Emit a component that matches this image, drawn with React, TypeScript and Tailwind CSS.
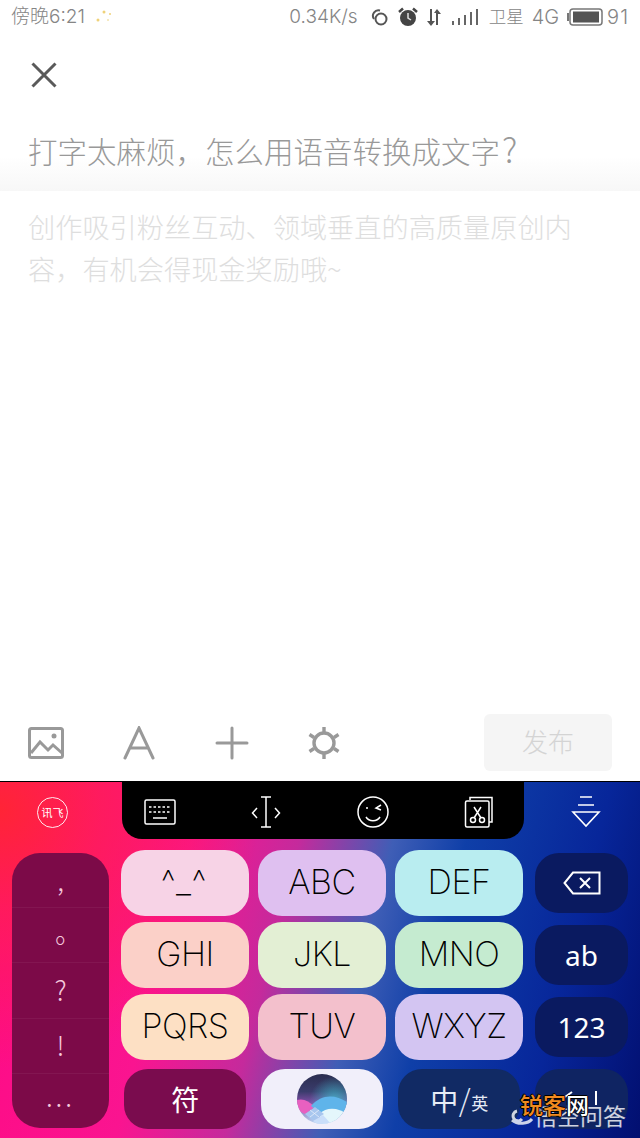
const cjk = "font-['Noto_Sans_CJK_SC',sans-serif]";

const letterRows = [
  [
    { label: "^_^", cls: "bg-[#f7d3e6] tracking-[3px]" },
    { label: "ABC", cls: "bg-[#dfc0f0]" },
    { label: "DEF", cls: "bg-[#b9edf0]" },
  ],
  [
    { label: "GHI", cls: "bg-[#fbd0c8]" },
    { label: "JKL", cls: "bg-[#e3efd4]" },
    { label: "MNO", cls: "bg-[#c5ebd0]" },
  ],
  [
    { label: "PQRS", cls: "bg-[#fde0c4]" },
    { label: "TUV", cls: "bg-[#f3c0cc]" },
    { label: "WXYZ", cls: "bg-[#d3c5f2]" },
  ],
];

const punctuation = [
  { label: ",", cls: "" },
  { label: "。", cls: "translate-x-[8px] -translate-y-[3px]" },
  { label: "?", cls: "" },
  { label: "!", cls: "" },
  { label: "...", cls: "tracking-[3px] -translate-y-[5px]" },
];

const StatusIcons = () => (
  <>
    {/* link */}
    <svg width="20" height="20" viewBox="0 0 20 20" fill="none" stroke="#555" strokeWidth="2">
      <circle cx="12" cy="12" r="5.5" />
      <path d="M5 12 A5.5 5.5 0 0 1 11 3.5" />
    </svg>
    {/* alarm */}
    <svg width="20" height="20" viewBox="0 0 20 20" className="ml-[9px]">
      <circle cx="10" cy="11" r="8" fill="#444" />
      <path d="M1 5 L5 1.5 M19 5 L15 1.5" stroke="#444" strokeWidth="2.5" />
      <path d="M10 6 V11 L13 13" stroke="#ddd" strokeWidth="1.5" fill="none" />
    </svg>
    {/* data arrows */}
    <svg width="16" height="18" viewBox="0 0 16 18" className="ml-2" fill="#555">
      <path d="M4 1h2v12h3l-4 5-4-5h3z" />
      <path d="M10 17h2V6h3l-4-5-3 4h2z" />
    </svg>
    {/* signal */}
    <svg width="26" height="18" viewBox="0 0 26 18" className="ml-[10px]" fill="#666">
      <rect x="0" y="13" width="2" height="4" />
      <rect x="6" y="10" width="2" height="7" />
      <rect x="12" y="7" width="2" height="10" />
      <rect x="18" y="4" width="2" height="13" />
      <rect x="24" y="1" width="2" height="16" />
    </svg>
  </>
);

const Battery = () => (
  <svg width="36" height="18" viewBox="0 0 36 18" className="ml-2">
    <rect x="0" y="5" width="2" height="8" fill="#777" />
    <rect x="3" y="1" width="32" height="16" rx="3" fill="none" stroke="#777" strokeWidth="1.5" />
    <rect x="6" y="3.5" width="26" height="11" fill="#555" />
  </svg>
);

const Sparkles = () => (
  <svg width="18" height="18" viewBox="0 0 18 18" fill="#efd27a" className="ml-[11px]">
    <circle cx="8" cy="4" r="1.5" />
    <circle cx="14" cy="6" r="1" />
    <circle cx="2" cy="12" r="1.5" />
    <circle cx="12" cy="12" r="1" fill="#f3e3ac" />
  </svg>
);

const Siri = () => (
  <svg width="50" height="50" viewBox="0 0 50 50">
    <defs>
      <linearGradient id="orb" x1="0" y1="0" x2="0" y2="1">
        <stop offset="0" stopColor="#2b2d4f" />
        <stop offset="0.35" stopColor="#3a3c6c" />
        <stop offset="0.55" stopColor="#7a4ba0" />
        <stop offset="1" stopColor="#bcd8f4" />
      </linearGradient>
      <radialGradient id="glowTeal" cx="0.75" cy="0.55" r="0.5">
        <stop offset="0" stopColor="#3fb6c8" stopOpacity="0.9" />
        <stop offset="1" stopColor="#3fb6c8" stopOpacity="0" />
      </radialGradient>
      <clipPath id="orbClip">
        <circle cx="25" cy="25" r="25" />
      </clipPath>
    </defs>
    <circle cx="25" cy="25" r="25" fill="url(#orb)" />
    <circle cx="25" cy="25" r="25" fill="url(#glowTeal)" />
    <g clipPath="url(#orbClip)">
      <path d="M0 26 C6 24 12 27 18 33 L8 40 L0 36 Z" fill="#e860c0" />
      <path d="M14 32 C24 20 38 20 50 28 V40 C40 34 30 34 24 40 Z" fill="#5fb4ea" />
      <path d="M22 40 C30 32 42 34 50 40 V50 H26 Z" fill="#e4f6fb" />
      <path d="M8 40 L18 33 L27 40 L16 47 Z" fill="#a9c6ee" />
      <path d="M16 47 L26 41 L34 50 H20 Z" fill="#c9defa" />
      <path d="M13 36 L22 43 M22 36 L13 43" stroke="#ffffff" strokeWidth="0.8" opacity="0.7" />
    </g>
  </svg>
);

const App = () => {
  return (
    <div className={`w-[640px] h-[1138px] flex flex-col bg-white overflow-hidden ${cjk}`}>
      {/* Status bar */}
      <div className="h-[34px] flex items-center pl-[11px] pr-[11px] text-[19px] font-light text-[#858585] font-['Inter','Noto_Sans_CJK_SC',sans-serif]">
        <span>傍晚6:21</span>
        <Sparkles />
        <div className="ml-auto flex items-center">
          <span className="mr-[11px]">0.34K/s</span>
          <StatusIcons />
          <span className="ml-[11px] text-[17.5px]">卫星</span>
          <span className="ml-2 text-[20px]">4G</span>
          <Battery />
          <span className="ml-1 text-[20px] tracking-[1px]">91</span>
        </div>
      </div>

      {/* Close + title */}
      <div className="h-[157px] shrink-0 bg-gradient-to-b from-white from-[78%] to-[#f7f7f7] px-7">
        <svg width="28" height="28" viewBox="0 0 28 28" className="mt-[27px] ml-[2px]" stroke="#5a5a5a" strokeWidth="3">
          <path d="M2.5 2.5 L25.5 25.5 M25.5 2.5 L2.5 25.5" />
        </svg>
        <div className="mt-[39px] text-[29.5px] leading-[42px] font-light text-[#999] whitespace-nowrap">
          打字太麻烦，怎么用语音转换成文字<span className="text-[34px] ml-[2px]">?</span>
        </div>
      </div>

      {/* Body placeholder */}
      <div className="flex-1 px-7 pt-[14px] text-[27.2px] leading-[42px] font-light text-[#dedede]">
        创作吸引粉丝互动、领域垂直的高质量原创内容，有机会得现金奖励哦~
      </div>

      {/* Toolbar */}
      <div className="h-[57px] shrink-0 mb-[10px] flex items-center pl-7 pr-7">
        <svg width="36" height="32" viewBox="0 0 36 32" fill="none" stroke="#999" strokeWidth="3">
          <rect x="1.5" y="1.5" width="33" height="29" rx="2" />
          <path d="M3 26 L12 15 L20 23 L25 18 L34 26" />
          <circle cx="26" cy="9" r="2.5" fill="#999" stroke="none" />
        </svg>
        <svg width="32" height="34" viewBox="0 0 32 34" className="ml-[59px]" fill="none" stroke="#999" strokeWidth="3" strokeLinecap="round">
          <path d="M2 32 L16 2 L30 32 M7 22 H25" />
        </svg>
        <svg width="34" height="34" viewBox="0 0 34 34" className="ml-[60px]" stroke="#999" strokeWidth="3" strokeLinecap="round">
          <path d="M17 2 V32 M2 17 H32" />
        </svg>
        <svg width="34" height="34" viewBox="0 0 34 34" className="ml-[58px]" fill="none" stroke="#999" strokeWidth="3.4">
          <circle cx="17" cy="17" r="10" />
          <path d="M17 1 V6 M17 28 V33 M2.5 8.5 L7 11.5 M27 22.5 L31.5 25.5 M2.5 25.5 L7 22.5 M27 11.5 L31.5 8.5" />
        </svg>
        <div className="ml-auto w-[128px] h-[57px] pb-1 rounded-md bg-[#f5f5f5] flex items-center justify-center text-[26px] font-light text-[#d4d4d4]">
          发布
        </div>
      </div>

      {/* Keyboard */}
      <div className="relative h-[357px] shrink-0 overflow-hidden bg-[radial-gradient(circle_at_0%_8%,#ff2436_0%,rgba(255,30,80,0.75)_14%,rgba(255,10,120,0)_36%),linear-gradient(104deg,#ff0a84_0%,#fa1490_28%,#c52a9c_43%,#3f5eb6_56%,#0f3fa8_66%,#07269a_84%,#020f70_100%)]">
        <div className="h-[58px] flex items-stretch border-t border-black">
          <div className="w-[122px] pl-[37px] pt-[3px] flex items-center">
            <div className="w-[31px] h-[31px] rounded-full border-[1.5px] border-white/90 flex items-center justify-center text-[11px] leading-none text-white">
              讯飞
            </div>
          </div>
          <div className="w-[402px] bg-black rounded-b-[20px] flex items-center justify-between pt-[3px] pl-[22px] pr-[30px]">
            <svg width="32" height="26" viewBox="0 0 32 26" fill="none" stroke="#fff" strokeWidth="1.5">
              <rect x="1" y="1" width="30" height="24" rx="1.5" />
              <path d="M5 8 H27 M5 13 H27" strokeDasharray="2.5 2" />
              <path d="M9 19 H23" />
            </svg>
            <svg width="30" height="34" viewBox="0 0 30 34" fill="none" stroke="#fff" strokeWidth="1.5">
              <path d="M10 2 H20 M10 32 H20 M15 2 V32 M6 13 L1.5 18 L6 23 M24 13 L28.5 18 L24 23" />
            </svg>
            <svg width="32" height="32" viewBox="0 0 32 32" fill="none" stroke="#fff" strokeWidth="1.5">
              <circle cx="16" cy="16" r="15" />
              <path d="M9 21 C12 26 20 26 23 21 M24 9 L19 12 L24 14" />
              <circle cx="10" cy="12" r="1" fill="#fff" stroke="none" />
            </svg>
            <svg width="30" height="32" viewBox="0 0 30 32" fill="none" stroke="#fff" strokeWidth="1.5">
              <path d="M6 4 V1.5 H28 V26 H25" />
              <rect x="1.5" y="5" width="23.5" height="26" rx="1.5" />
              <circle cx="9" cy="24" r="2.5" />
              <circle cx="18" cy="24" r="2.5" />
              <path d="M10 22 L17 11 M17 22 L10 11" />
            </svg>
          </div>
          <div className="flex-1 pl-[8px] pt-[3px] flex items-center justify-center">
            <svg width="30" height="34" viewBox="0 0 30 34" fill="none" stroke="#fff" strokeWidth="1.6">
              <path d="M9 2 H21 M7 10 H23 M2 17 H28 L15 31 Z" />
            </svg>
          </div>
        </div>

        <div className="flex pl-3 pr-3 pt-[11px]">
          {/* Punctuation column */}
          <div className="w-[97px] h-[275px] mt-[3px] rounded-[28px] bg-[#7c0a48] flex flex-col divide-y divide-white/5 text-[#f5c8dc] text-[27px] font-light">
            {punctuation.map((p) => (
              <div key={p.label} className="flex-1 flex items-center justify-center">
                <span className={p.cls}>{p.label}</span>
              </div>
            ))}
          </div>

          {/* Centre keys */}
          <div className="w-[402px] ml-3 flex flex-col font-['Inter',sans-serif] font-extralight text-[34px] tracking-[-0.5px] text-black">
            {letterRows.map((row, i) => (
              <div key={i} className="flex gap-[9px] mb-[6px] h-[66px]">
                {row.map((k) => (
                  <div key={k.label} className={`w-[128px] pb-[3px] rounded-[24px] flex items-center justify-center ${k.cls}`}>
                    {k.label}
                  </div>
                ))}
              </div>
            ))}
            <div className="flex gap-[15px] px-[3px] mt-[3px] h-[60px]">
              <div className={`w-[122px] rounded-[24px] bg-[#7a0c4e] flex items-center justify-center text-white text-[28px] font-normal ${cjk}`}>
                符
              </div>
              <div className="w-[122px] rounded-[24px] bg-[#f1effa] flex items-center justify-center">
                <Siri />
              </div>
              <div className={`w-[122px] rounded-[24px] bg-[#112a64] flex items-center justify-center text-[#e6ecf6] text-[28px] font-normal ${cjk}`}>
                中<span className="font-light text-[30px] mx-[1px]">/</span>
                <span className="text-[17px] mt-2">英</span>
              </div>
            </div>
          </div>

          {/* Right column */}
          <div className="w-[93px] ml-3 mt-[3px] flex flex-col gap-3 text-white text-[28px] font-['Noto_Sans',sans-serif]">
            <div className="h-[60px] rounded-[24px] bg-[#0a1a60] flex items-center justify-center">
              <svg width="38" height="24" viewBox="0 0 38 24" fill="none" stroke="#fff" strokeWidth="2">
                <path d="M10 1.5 H36.5 V22.5 H10 L1.5 12 Z" />
                <path d="M17 7 L27 17 M27 7 L17 17" />
              </svg>
            </div>
            <div className="h-[60px] rounded-[24px] bg-[#0a1a60] flex items-center justify-center">ab</div>
            <div className="h-[60px] rounded-[24px] bg-[#0a1a60] flex items-center justify-center">123</div>
            <div className="h-[60px] rounded-[24px] bg-[#0f2462] flex items-start justify-center pt-5">
              <svg width="40" height="20" viewBox="0 0 40 20" fill="none" stroke="#fff" strokeWidth="2">
                <path d="M3 8 L10 3 M34 2 V16" />
              </svg>
            </div>
          </div>
        </div>

        {/* Watermark */}
        <div className="absolute left-[510px] top-[322px] flex items-center text-[23px] leading-[24px] text-white/80 whitespace-nowrap">
          <svg width="24" height="20" viewBox="0 0 24 20" fill="none" stroke="#ffffff" strokeWidth="3" opacity="0.8">
            <path d="M2 15 C8 20 18 19 22 14 M12 14 A5 5 0 1 1 7 6" />
          </svg>
          悟空问答
        </div>
        <div className="absolute left-[520px] top-[309px] text-[23px] leading-[28px] font-medium whitespace-nowrap [text-shadow:1px_0_#000,-1px_0_#000,0_1px_#000,0_-1px_#000]">
          <span className="text-[#f08a20]">锐客</span>
          <span className="text-white">网</span>
        </div>
      </div>
    </div>
  );
};

export default App;
